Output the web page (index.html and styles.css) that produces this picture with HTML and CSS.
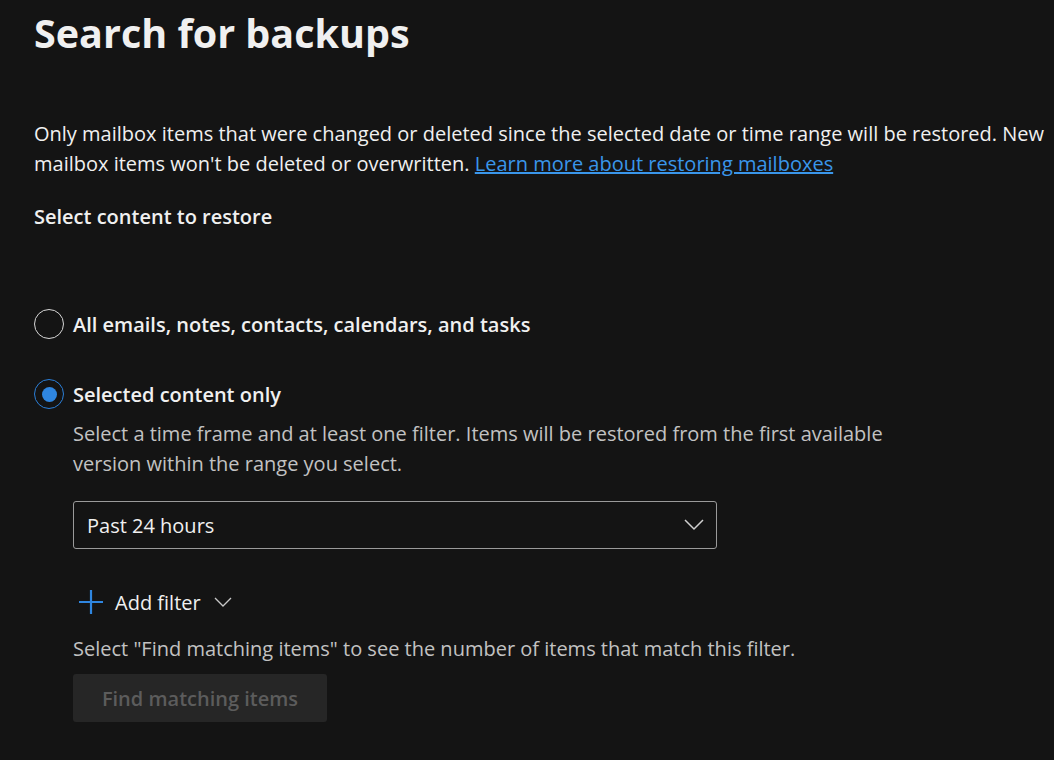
FILE: index.html
```html
<!DOCTYPE html>
<html lang="en">
<head>
<meta charset="utf-8">
<link rel="stylesheet" href="styles.css">
</head>
<body>
<div class="page">
  <h1 class="title">Search for backups</h1>
  <p class="intro">Only mailbox items that were changed or deleted since the selected date or time range will be restored. New mailbox items won't be deleted or overwritten. <a class="link" href="#">Learn more about restoring mailboxes</a></p>
  <div class="label">Select content to restore</div>
  <div class="options">
    <div class="option">
      <span class="radio"></span>
      <span class="option-text">All emails, notes, contacts, calendars, and tasks</span>
    </div>
    <div class="option">
      <span class="radio checked"><span class="dot"></span></span>
      <span class="option-text">Selected content only</span>
    </div>
  </div>
  <div class="sub">
    <p class="desc">Select a time frame and at least one filter. Items will be restored from the first available version within the range you select.</p>
    <div class="dropdown">
      <span>Past 24 hours</span>
      <svg class="chev" width="20" height="12" viewBox="0 0 20 12"><path d="M1 1 L10 10 L19 1" fill="none" stroke="#d0d0d0" stroke-width="1.5"/></svg>
    </div>
    <div class="add-filter">
      <svg class="plus" width="26" height="26" viewBox="0 0 26 26"><path d="M13 1 V25 M1 13 H25" stroke="#2f86e0" stroke-width="2.2" fill="none"/></svg>
      <span>Add filter</span>
      <svg class="small-chev" width="18" height="10" viewBox="0 0 18 10"><path d="M1 1 L9 9 L17 1" fill="none" stroke="#c8c8c8" stroke-width="1.3"/></svg>
    </div>
    <p class="hint">Select "Find matching items" to see the number of items that match this filter.</p>
    <button class="btn" disabled>Find matching items</button>
  </div>
</div>
</body>
</html>
```

FILE: styles.css
```css
html, body {
  margin: 0;
  padding: 0;
  background: #141414;
}
body {
  font-family: "Open Sans", "Noto Sans", sans-serif;
  color: #f0f0f0;
  font-size: 20px;
}
.page {
  padding: 0 4px 0 34px;
}
.title {
  margin: 0;
  padding-top: 6px;
  font-size: 39.5px;
  line-height: 54px;
  font-weight: 700;
  color: #f0f0f0;
}
.intro {
  margin: 59px 0 0;
  line-height: 30px;
  font-size: 20px;
}
.link {
  color: #3a96ea;
  text-decoration: underline;
}
.label {
  margin-top: 23px;
  font-weight: 600;
  line-height: 30px;
}
.options {
  margin-top: 77px;
  display: flex;
  flex-direction: column;
  gap: 40px;
}
.option {
  display: flex;
  align-items: center;
  gap: 9px;
  height: 30px;
  font-weight: 600;
}
.radio {
  width: 30px;
  height: 30px;
  box-sizing: border-box;
  border: 1.5px solid #d6d6d6;
  border-radius: 50%;
  display: flex;
  align-items: center;
  justify-content: center;
  flex-shrink: 0;
}
.radio.checked {
  border-color: #2b7fd8;
}
.dot {
  width: 15px;
  height: 15px;
  border-radius: 50%;
  background: #2f86e0;
}
.sub {
  padding-left: 39px;
  margin-top: 10px;
}
.desc {
  margin: 0;
  color: #c2c2c2;
  line-height: 30px;
  max-width: 830px;
}
.dropdown {
  margin-top: 22px;
  width: 644px;
  height: 48px;
  box-sizing: border-box;
  border: 1.5px solid #9a9a9a;
  border-radius: 3px;
  display: flex;
  align-items: center;
  justify-content: space-between;
  padding: 0 12px 0 13px;
}
.add-filter {
  margin-top: 38px;
  display: flex;
  align-items: center;
  height: 30px;
  padding-left: 5px;
}
.plus {
  margin-right: 11px;
}
.small-chev {
  margin-left: 13px;
}
.hint {
  margin: 17px 0 0;
  color: #c2c2c2;
  line-height: 30px;
}
.btn {
  margin-top: 10px;
  width: 254px;
  height: 48px;
  border: none;
  border-radius: 3px;
  background: #262626;
  color: #5c5c5c;
  font-family: inherit;
  font-size: 20px;
  font-weight: 600;
}
```
